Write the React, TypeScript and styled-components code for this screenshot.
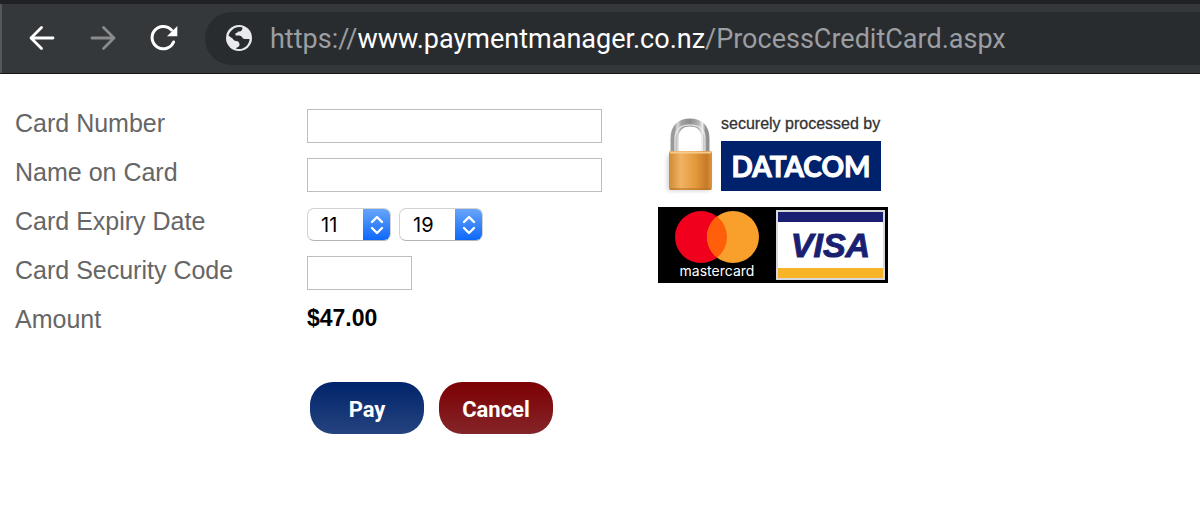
import React from "react";
import styled, { createGlobalStyle } from "styled-components";

const GlobalStyle = createGlobalStyle`
  * { box-sizing: border-box; }
  body {
    margin: 0;
    background: #fff;
    font-family: "Liberation Sans", Arial, sans-serif;
  }
`;

const Toolbar = styled.header`
  display: flex;
  align-items: center;
  height: 74px;
  padding-left: 23px;
  border-top: 4px solid #202124;
  border-bottom: 1px solid #17181a;
  background: #35383b;
  box-shadow: inset 2px 0 0 #55585a;
`;

const NavGroup = styled.nav`
  display: flex;
  flex: none;
  gap: 25px;
  width: 182px;
`;

const NavButton = styled.button`
  display: flex;
  width: 36px;
  height: 36px;
  padding: 0;
  border: 0;
  background: none;
  color: #fff;

  &:disabled { color: #898b8d; }
`;

const AddressBar = styled.div`
  display: flex;
  flex: 1;
  align-items: center;
  gap: 17px;
  min-width: 0;
  height: 53px;
  padding-left: 18px;
  border-radius: 27px 0 0 27px;
  background: #292c2f;
`;

const Url = styled.div`
  overflow: hidden;
  color: #9b9ea2;
  font-family: Roboto, Inter, sans-serif;
  font-size: 27px;
  line-height: 32px;
  white-space: nowrap;
`;

const Host = styled.span`
  color: #fff;
`;

const Page = styled.main`
  display: flex;
  flex-wrap: wrap;
  gap: 24px 56px;
  padding: 35px 15px;
`;

const PaymentForm = styled.form`
  display: flex;
  flex-direction: column;
  gap: 15px;
`;

const Row = styled.div`
  display: grid;
  grid-template-columns: 292px 295px;
  align-items: start;
  min-height: 34px;
`;

const Label = styled.label`
  color: #666;
  font-size: 25px;
  line-height: 28px;
`;

const TextInput = styled.input<{ $short?: boolean }>`
  width: ${(p) => (p.$short ? "105px" : "100%")};
  height: 34px;
  padding: 0 8px;
  border: 1px solid #bdbdbd;
  background: #fff;
  font-size: 20px;
`;

const Selects = styled.div`
  display: flex;
  gap: 8px;
  align-self: end;
`;

const SelectBox = styled.div`
  display: grid;
  width: 84px;
  height: 33px;
  overflow: hidden;
  border: 1px solid #d2d2d2;
  border-bottom-color: #b4b4b4;
  border-radius: 7px;
  background: #fff;
`;

const Select = styled.select`
  grid-area: 1 / 1;
  appearance: none;
  width: 100%;
  padding: 0 0 0 13px;
  border: 0;
  background: transparent;
  color: #000;
  font-family: Inter, Roboto, sans-serif;
  font-size: 20px;
`;

const Stepper = styled.span`
  display: flex;
  grid-area: 1 / 1;
  justify-content: center;
  justify-self: end;
  align-items: center;
  width: 28px;
  margin: -1px;
  background: linear-gradient(#6ba7f8, #0a66fb);
  pointer-events: none;
`;

const Amount = styled.output`
  color: #000;
  font-size: 23px;
  font-weight: 700;
  line-height: 26px;
`;

const Actions = styled.div`
  display: flex;
  gap: 15px;
  padding: 28px 0 0 295px;
`;

const ActionButton = styled.button<{ $from: string; $to: string }>`
  width: 114px;
  height: 52px;
  padding: 2px 0 0;
  border: 0;
  border-radius: 23px;
  background: linear-gradient(${(p) => p.$from}, ${(p) => p.$to});
  color: #fff;
  font-family: Roboto, sans-serif;
  font-size: 22px;
  font-weight: 700;
`;

const Badges = styled.aside`
  display: flex;
  flex-direction: column;
  gap: 13px;
  width: 230px;
`;

const DatacomBadge = styled.div`
  display: flex;
  gap: 5px;
  padding: 5px 7px 0 6px;
`;

const DatacomText = styled.div`
  display: flex;
  flex: 1;
  flex-direction: column;
  gap: 7px;
  white-space: nowrap;
`;

const SecureNote = styled.span`
  color: #333;
  font-size: 16px;
  line-height: 20px;
  -webkit-text-stroke: 0.3px #333;
`;

const DatacomLogo = styled.span`
  display: flex;
  align-items: center;
  justify-content: center;
  height: 50px;
  background: #00216b;
  color: #fff;
  font-family: Lato, sans-serif;
  font-size: 28px;
  font-weight: 700;
  -webkit-text-stroke: 1px #fff;
`;

const CardBrands = styled.div`
  display: flex;
  justify-content: space-between;
  height: 76px;
  padding: 3px;
  background: #000;
`;

const Mastercard = styled.div`
  display: flex;
  flex-direction: column;
  align-items: center;
  width: 112px;
  padding-top: 1px;
  color: #fff;
  font-family: Inter, sans-serif;
  font-size: 14px;
  line-height: 16px;
`;

const Visa = styled.div`
  display: flex;
  align-items: center;
  justify-content: center;
  width: 109px;
  border: 2px solid #d8d8dc;
  background: linear-gradient(#1a1f71 10px, #fff 10px, #fff 56px, #f7b428 56px);
  color: #1a1f71;
  font-size: 34px;
  font-style: italic;
  font-weight: 700;
  line-height: 36px;
  -webkit-text-stroke: 1px #1a1f71;
`;

const months = ["01", "02", "03", "04", "05", "06", "07", "08", "09", "10", "11", "12"];
const years = ["19", "20", "21", "22", "23", "24", "25"];

function ExpirySelect({ id, label, options, value }: { id: string; label: string; options: string[]; value: string }) {
  return (
    <SelectBox>
      <Select id={id} aria-label={label} defaultValue={value}>
        {options.map((o) => (
          <option key={o}>{o}</option>
        ))}
      </Select>
      <Stepper aria-hidden="true">
        <svg width="14" height="22" viewBox="0 0 14 22" fill="none" stroke="#fff" strokeWidth="2.4" strokeLinecap="round" strokeLinejoin="round">
          <path d="M2 8 7 3l5 5M2 14l5 5 5-5" />
        </svg>
      </Stepper>
    </SelectBox>
  );
}

function Padlock() {
  return (
    <svg width="52" height="80" viewBox="0 0 52 80" aria-hidden="true">
      <defs>
        <linearGradient id="body" x1="0" x2="1" y1="0" y2="0">
          <stop offset="0" stopColor="#d08a35" />
          <stop offset="0.28" stopColor="#f0b264" />
          <stop offset="0.6" stopColor="#e59a3c" />
          <stop offset="0.88" stopColor="#c67a26" />
          <stop offset="1" stopColor="#dc9443" />
        </linearGradient>
        <linearGradient id="shackle" x1="0" x2="1" y1="0" y2="0">
          <stop offset="0" stopColor="#9a9a9a" />
          <stop offset="0.1" stopColor="#d8d8d8" />
          <stop offset="0.22" stopColor="#a2a2a2" />
          <stop offset="0.5" stopColor="#8d8d8d" />
          <stop offset="0.78" stopColor="#b4b4b4" />
          <stop offset="0.9" stopColor="#ededed" />
          <stop offset="1" stopColor="#909090" />
        </linearGradient>
        <filter id="soft" x="-20%" y="-20%" width="140%" height="140%">
          <feGaussianBlur stdDeviation="2" />
        </filter>
      </defs>
      <rect x="3" y="41" width="43" height="36" rx="3" fill="#bbb" opacity="0.6" filter="url(#soft)" />
      <path d="M10.500 42V25C10.500 13 17 8.500 26 8.500S41.500 13 41.500 25v17" fill="none" stroke="url(#shackle)" strokeWidth="8" />
      <path d="M11 40V25c0-10 6-14 15-14s15 4 15 14v15" fill="none" stroke="#f4f4f4" strokeWidth="1.500" opacity="0.7" />
      <rect x="5" y="37" width="43" height="39" rx="2" fill="url(#body)" />
      <path d="M6 38.500h41" stroke="#f6cc8d" strokeWidth="2" />
      <path d="M6 75h41" stroke="#b36f25" strokeWidth="1.500" opacity="0.7" />
    </svg>
  );
}

export default function App() {
  return (
    <>
      <GlobalStyle />
      <Toolbar>
        <NavGroup aria-label="Browser">
          <NavButton aria-label="Back">
            <svg width="36" height="36" viewBox="0 0 36 36" fill="none" stroke="currentColor" strokeWidth="2.800" strokeLinecap="round" strokeLinejoin="round">
              <path d="M30 17H8M18.500 6.500 8 17l10.500 10.500" />
            </svg>
          </NavButton>
          <NavButton aria-label="Forward" disabled>
            <svg width="36" height="36" viewBox="0 0 36 36" fill="none" stroke="currentColor" strokeWidth="2.800" strokeLinecap="round" strokeLinejoin="round">
              <path d="M8 17h22M19.500 6.500 30 17 19.500 27.500" />
            </svg>
          </NavButton>
          <NavButton aria-label="Reload">
            <svg width="36" height="36" viewBox="0 0 36 36">
              <path d="M26.500 9A11.200 11.200 0 1 0 28.600 21" fill="none" stroke="currentColor" strokeWidth="3" strokeLinecap="round" />
              <path d="M32.300 5v10.300H22z" fill="currentColor" />
            </svg>
          </NavButton>
        </NavGroup>
        <AddressBar>
          <svg width="30" height="30" viewBox="0 0 30 30" aria-hidden="true">
            <circle cx="16" cy="14" r="13" fill="#e8eaed" />
            <path d="M5.500 11.500C7 7 11 3.200 16 3c2 0 3.500.3 3.500.8 0 1.200-.7 3.700-2.500 3.700h-1.500c-1 0-1 1.500-2 1.500h-1v2.500h3.500c3 0 3.500 3.500 5.500 3.500h5c0 4-3 8-7 9.500-2 .8-5 .8-6.500 0 0-1 3.500-1.500 3.500-3.500 0-2.500-1-4-3.500-4s-3-3-5-3.500z" fill="#292c2f" />
          </svg>
          <Url>
            https://<Host>www.paymentmanager.co.nz</Host>/ProcessCreditCard.aspx
          </Url>
        </AddressBar>
      </Toolbar>
      <Page>
        <PaymentForm onSubmit={(e) => e.preventDefault()}>
          <Row>
            <Label htmlFor="number">Card Number</Label>
            <TextInput id="number" />
          </Row>
          <Row>
            <Label htmlFor="holder">Name on Card</Label>
            <TextInput id="holder" />
          </Row>
          <Row>
            <Label htmlFor="month">Card Expiry Date</Label>
            <Selects>
              <ExpirySelect id="month" label="Expiry month" options={months} value="11" />
              <ExpirySelect id="year" label="Expiry year" options={years} value="19" />
            </Selects>
          </Row>
          <Row>
            <Label htmlFor="code">Card Security Code</Label>
            <TextInput id="code" $short />
          </Row>
          <Row>
            <Label htmlFor="amount">Amount</Label>
            <Amount id="amount">$47.00</Amount>
          </Row>
          <Actions>
            <ActionButton type="submit" $from="#00246b" $to="#25437f">Pay</ActionButton>
            <ActionButton type="button" $from="#7c0003" $to="#842529">Cancel</ActionButton>
          </Actions>
        </PaymentForm>
        <Badges>
          <DatacomBadge>
            <Padlock />
            <DatacomText>
              <SecureNote>securely processed by</SecureNote>
              <DatacomLogo>DATACOM</DatacomLogo>
            </DatacomText>
          </DatacomBadge>
          <CardBrands>
            <Mastercard>
              <svg width="84" height="52" viewBox="0 0 84 52" aria-hidden="true">
                <circle cx="26" cy="26" r="26" fill="#f0001c" />
                <circle cx="58" cy="26" r="26" fill="#f9a02c" />
                <path d="M42 5.500a26 26 0 0 1 0 41 26 26 0 0 1 0-41z" fill="#ff5f0a" />
              </svg>
              mastercard
            </Mastercard>
            <Visa>VISA</Visa>
          </CardBrands>
        </Badges>
      </Page>
    </>
  );
}
